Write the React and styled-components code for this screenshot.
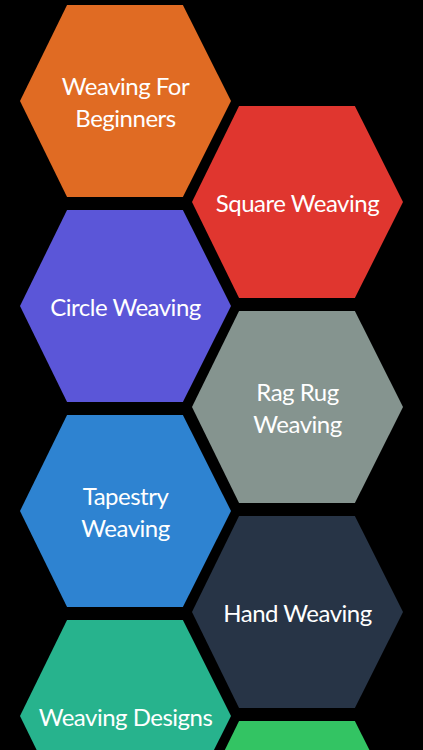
import React from "react";
import styled, { createGlobalStyle } from "styled-components";

const GlobalStyle = createGlobalStyle`
  html, body {
    margin: 0;
    padding: 0;
    background: #000;
    overflow: hidden;
  }
`;

const Page = styled.div`
  width: 423px;
  height: 750px;
  background: #000;
  overflow: hidden;
  font-family: "Lato", "Open Sans", sans-serif;
`;

const Honeycomb = styled.div`
  display: flex;
  flex-direction: row;
  align-items: flex-start;
  padding: 5px 0 0 20px;
`;

const Column = styled.div`
  display: flex;
  flex-direction: column;
  gap: 13px;
  flex-shrink: 0;
  margin-left: ${({ $offset }) => ($offset ? "-39px" : "0")};
  padding-top: ${({ $offset }) => ($offset ? "101px" : "0")};
`;

const Hex = styled.button`
  width: 211px;
  height: 192px;
  border: none;
  padding: 2px 0 0;
  margin: 0;
  background: ${({ $color }) => $color};
  clip-path: polygon(22.3% 0, 77.2% 0, 100% 50%, 77.2% 100%, 22.3% 100%, 0 50%);
  display: flex;
  align-items: center;
  justify-content: center;
  text-align: center;
  white-space: pre;
  color: #fff;
  font-family: "Lato", "Open Sans", sans-serif;
  font-size: 24px;
  line-height: 32px;
  letter-spacing: -0.5px;
  font-weight: 400;
  cursor: pointer;
`;

const left = [
  { title: "Weaving For\nBeginners", color: "#e06b23" },
  { title: "Circle Weaving", color: "#5b56d8" },
  { title: "Tapestry\nWeaving", color: "#2e83d1" },
  { title: "Weaving Designs", color: "#27b38d" },
];

const right = [
  { title: "Square Weaving", color: "#e0362f" },
  { title: "Rag Rug\nWeaving", color: "#85948f" },
  { title: "Hand Weaving", color: "#273446" },
  { title: "", color: "#33c463" },
];

const App = () => (
  <Page>
    <GlobalStyle />
    <Honeycomb>
      <Column>
        {left.map((item) => (
          <Hex key={item.title} $color={item.color}>
            {item.title}
          </Hex>
        ))}
      </Column>
      <Column $offset>
        {right.map((item, i) => (
          <Hex key={i} $color={item.color}>
            {item.title}
          </Hex>
        ))}
      </Column>
    </Honeycomb>
  </Page>
);

export default App;
